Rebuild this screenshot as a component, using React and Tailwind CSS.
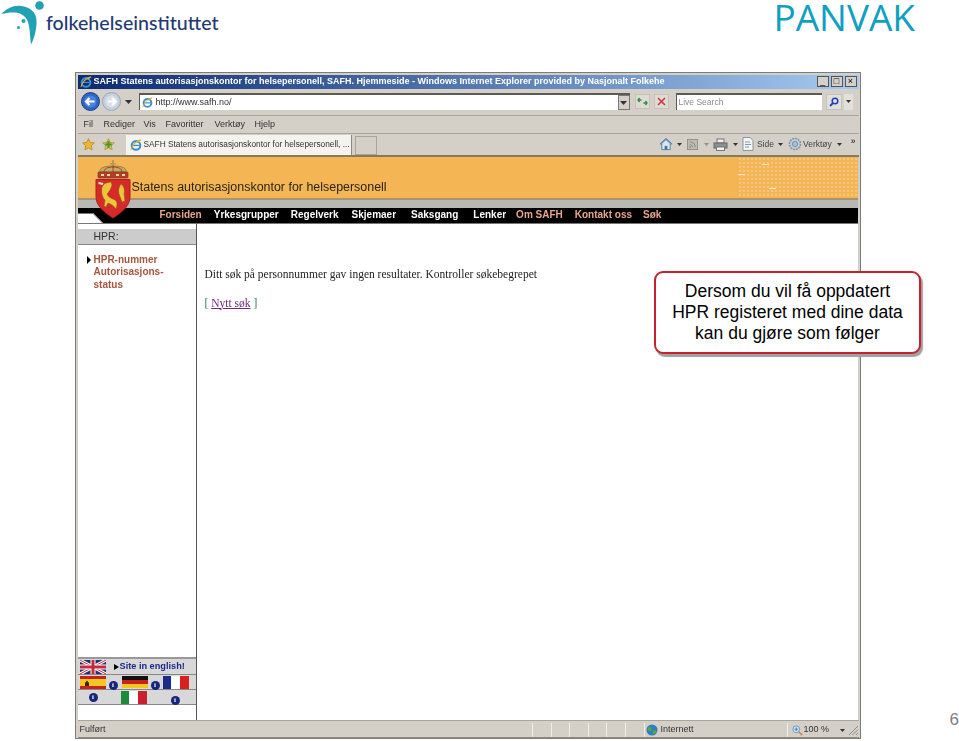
import React from 'react'

const Arrow = ({ className = '', small }) => (
  <svg width={small ? 5 : 7} height={small ? 3 : 4} viewBox="0 0 7 4" className={className}>
    <path d="M0 0h7L3.500 4z" fill="#333" />
  </svg>
)

const Logo = () => (
  <svg width="46" height="46" viewBox="0 0 46 46" className="shrink-0">
    <circle cx="39.500" cy="5.500" r="4.300" fill="#22a0b4" />
    <path d="M1.500 14C7 8 14 5 21 6c9 1 15 6 15.500 14 .3 9-2 18-5.500 24.500C30 37 30 28 28 22c-2-6-7-9-13-9.500-5-.3-9 .3-13.500 1.500z" fill="#22a0b4" />
    <circle cx="23.500" cy="21" r="2" fill="#22a0b4" />
    <circle cx="18.500" cy="27.500" r="1.500" fill="#22a0b4" />
  </svg>
)

const IeIcon = ({ size = 12 }) => (
  <svg width={size} height={size} viewBox="0 0 14 14" className="shrink-0">
    <circle cx="7" cy="7.500" r="5" fill="none" stroke="#3a8fd0" strokeWidth="2.400" />
    <path d="M3 7.500h8" stroke="#3a8fd0" strokeWidth="1.500" />
    <path d="M1 13C2 8 7 2 13 1c-2 1-3 2-4 3" fill="none" stroke="#e0b030" strokeWidth="1.200" />
  </svg>
)

const NavButton = ({ dim }) => (
  <svg width="19" height="19" viewBox="0 0 19 19" className="shrink-0">
    <circle cx="9.500" cy="9.500" r="9" fill={dim ? '#c5cfdc' : '#2f63c4'} stroke={dim ? '#9aa7b8' : '#1c3f8c'} />
    <circle cx="9.500" cy="9.500" r="6" fill={dim ? '#d8dfe8' : '#4b82dc'} />
    {dim
      ? <path d="M14 9.500H6M10 6l4 3.500-4 3.500" fill="none" stroke="#fff" strokeWidth="2" />
      : <path d="M5 9.500h8.500M8.500 6L5 9.500 8.500 13" fill="none" stroke="#fff" strokeWidth="2.200" />}
  </svg>
)

const Star = ({ fill, stroke }) => (
  <svg width="13" height="13" viewBox="0 0 14 14">
    <path d="M7 .8l1.900 4 4.400.5-3.200 3 .8 4.400L7 10.600l-3.900 2.100.8-4.400-3.200-3 4.400-.5z" fill={fill} stroke={stroke} strokeWidth=".7" />
  </svg>
)

const AddFav = () => (
  <svg width="13" height="13" viewBox="0 0 14 14">
    <path d="M7 .8l1.900 4 4.400.5-3.200 3 .8 4.400L7 10.600l-3.900 2.100.8-4.400-3.200-3 4.400-.5z" fill="#e4c040" stroke="#a08a20" strokeWidth=".7" />
    <path d="M7 3.500v7M3.500 7h7" stroke="#3f9a35" strokeWidth="2.400" />
  </svg>
)

const HomeIcon = () => (
  <svg width="14" height="14" viewBox="0 0 15 14">
    <path d="M7.500 1L1 7h2v6h9V7h2z" fill="#dfe4ea" stroke="#5a7a98" />
    <path d="M6 9h3v4H6z" fill="#3a78b8" />
    <path d="M7.500 1L1 7h2l4.500-4L12 7h2z" fill="#5f93c4" />
  </svg>
)

const RssIcon = () => (
  <svg width="11" height="11" viewBox="0 0 12 12">
    <rect x=".5" y=".5" width="11" height="11" fill="#bdbdb6" stroke="#8f8f8a" />
    <path d="M3 3c3.500 0 6 2.500 6 6M3 6c1.700 0 3 1.300 3 3" fill="none" stroke="#85857f" />
    <circle cx="3.500" cy="8.500" r="1" fill="#85857f" />
  </svg>
)

const PrintIcon = () => (
  <svg width="15" height="13" viewBox="0 0 15 13">
    <rect x="4" y="1" width="7" height="4" fill="#eee" stroke="#777" />
    <rect x="1" y="5" width="13" height="5" fill="#8a8f94" stroke="#666" />
    <rect x="3.500" y="9" width="8" height="3.500" fill="#f3f3f3" stroke="#777" />
  </svg>
)

const PageIcon = () => (
  <svg width="12" height="14" viewBox="0 0 12 14">
    <path d="M1 .5h7l3 3v10H1z" fill="#f2f4f6" stroke="#8a96a5" />
    <path d="M3 5h5M3 7.500h6M3 10h4" stroke="#7f9ab8" />
  </svg>
)

const GearIcon = () => (
  <svg width="14" height="14" viewBox="0 0 14 14">
    <circle cx="7" cy="7" r="5.500" fill="#c4ccd2" stroke="#7f98a8" strokeWidth="1.600" strokeDasharray="2 .8" />
    <circle cx="7" cy="7" r="2.500" fill="#a8c8e0" stroke="#6f8a9c" />
  </svg>
)

const GlobeIcon = () => (
  <svg width="12" height="12" viewBox="0 0 13 13" className="shrink-0">
    <circle cx="6.500" cy="6.500" r="6" fill="#2f7fc4" />
    <path d="M2 3c2-.5 3 .5 4 2S5 8 3.500 7.500 1.500 5 2 3zM8 7c1.500-.5 3 0 3.500 1-.5 2-2 3-3 3S7 8 8 7z" fill="#5aa83c" />
  </svg>
)

const ZoomIcon = () => (
  <svg width="11" height="11" viewBox="0 0 13 13" className="shrink-0">
    <circle cx="5" cy="5" r="4" fill="#cfe2f2" stroke="#5a8fc0" />
    <path d="M3 5h4M5 3v4" stroke="#2f6fb0" />
    <path d="M8 8l4 4" stroke="#c08a40" strokeWidth="1.800" />
  </svg>
)

const Grip = () => (
  <svg width="11" height="11" viewBox="0 0 11 11" className="shrink-0">
    <path d="M10 1L1 10M10 4.500L4.500 10M10 8l-2 2" stroke="#8f8c84" />
  </svg>
)

const Crest = () => (
  <svg width="36" height="60" viewBox="0 0 36 60" className="absolute left-[17px] top-[3px]">
    <path d="M17 0h2v3h2v1.500h-2V7h-2V4.500h-2V3h2z" fill="#b89a50" />
    <path d="M5 12C4 8 9 6 18 6s14 2 13 6z" fill="#c8a860" stroke="#7c5f2a" strokeWidth=".6" />
    <path d="M9 12c0-3 3-5 9-5s9 2 9 5M18 6v6" fill="none" stroke="#8a3028" strokeWidth=".8" />
    <rect x="3" y="12" width="30" height="6" rx="1" fill="#b8382c" stroke="#6a4a1a" strokeWidth=".7" />
    <path d="M6 15h3M12 15h3M21 15h3M27 15h3" stroke="#f0dc98" strokeWidth="2.200" />
    <path d="M1 19.500h34v17c0 9-7 15-17 21.500C8 51.500 1 45.500 1 36.500z" fill="#d62a2a" stroke="#b02020" />
    <path d="M3.500 22l5 1-1 2-4-1z" fill="#f2e8d8" />
    <path d="M9 24c2-1 5-2 7-2l1 3c-1 4-3 7-5 9 1 3 4 4 8 6 3 2 2 6 1 9-2-3-5-5-8-6l-2 4-2-1 1-6c-3-3-4-8-3-13 1-2 2-2 2-3z" fill="#eec53a" stroke="#7a5a14" strokeWidth=".5" />
    <path d="M26 24c3 2 4 6 3 10l1 7-3 1-3-8c-1-4 0-7 2-10z" fill="#eec53a" stroke="#7a5a14" strokeWidth=".5" />
  </svg>
)

const Notch = () => (
  <svg width="26" height="10" viewBox="0 0 26 10" className="absolute left-0 bottom-0">
    <path d="M0 0h15l10 10H0z" fill="#fff" />
    <path d="M0 .5h15l10 10" fill="none" stroke="#777" />
  </svg>
)

const UkFlag = () => (
  <svg width="26" height="14" viewBox="0 0 26 14" className="block shrink-0">
    <rect width="26" height="14" fill="#27306e" />
    <path d="M0 0l26 14M26 0L0 14" stroke="#fff" strokeWidth="3" />
    <path d="M0 0l26 14M26 0L0 14" stroke="#c8283c" strokeWidth="1" />
    <path d="M13 0v14M0 7h26" stroke="#fff" strokeWidth="5" />
    <path d="M13 0v14M0 7h26" stroke="#c8283c" strokeWidth="3" />
  </svg>
)

const Bands = ({ colors, vertical }) => (
  <div className={`flex shrink-0 w-[26px] h-[13px] ${vertical ? 'flex-row' : 'flex-col'}`}>
    {colors.map((c, i) => (
      <div key={i} className="flex-1" style={{ background: c }} />
    ))}
  </div>
)

const SpainFlag = () => (
  <svg width="26" height="13" viewBox="0 0 26 13" className="block shrink-0">
    <rect width="26" height="13" fill="#c8201c" />
    <rect y="3" width="26" height="7" fill="#f0c820" />
    <path d="M5 10V7l2-2.500L9 7v3z" fill="#402010" />
  </svg>
)

const Info = () => (
  <span className="inline-flex shrink-0 w-[9px] h-[9px] rounded-full bg-[#17257a] items-center justify-center text-white text-[7px] leading-none font-bold font-['Liberation_Serif',serif]">
    i
  </span>
)

const menuItems = [
  ['Fil', 'w-[20px]'],
  ['Rediger', 'w-[40px]'],
  ['Vis', 'w-[22px]'],
  ['Favoritter', 'w-[49px]'],
  ['Verktøy', 'w-[40px]'],
  ['Hjelp', 'w-[30px]'],
]

const navItems = [
  ['Forsiden', 'text-[#e9a58f]'],
  ['Yrkesgrupper', 'text-white ml-[12px]'],
  ['Regelverk', 'text-white ml-[12px]'],
  ['Skjemaer', 'text-white ml-[13px]'],
  ['Saksgang', 'text-white ml-[15px]'],
  ['Lenker', 'text-white ml-[15px]'],
  ['Om SAFH', 'text-[#e9a58f] ml-[10px]'],
  ['Kontakt oss', 'text-[#e9a58f] ml-[12px]'],
  ['Søk', 'text-[#e9a58f] ml-[11px]'],
]

export default function App() {
  return (
    <div className="relative w-[959px] h-[741px] overflow-hidden bg-white flex flex-col font-['Liberation_Sans',sans-serif]">
      {/* Slide header */}
      <header className="h-[72px] shrink-0 flex items-start justify-between pr-[44px]">
        <div className="flex items-start">
          <Logo />
          <span className="mt-[11px] text-[19.600px] leading-[24px] font-['Lato',sans-serif] font-medium text-[#233a72]">
            folkehelseinstituttet
          </span>
        </div>
        <span className="text-[37px] leading-[34px] font-['Open_Sans',sans-serif] text-[#10a0bf]">PANVAK</span>
      </header>

      <div className="flex flex-1 min-h-0 pl-[75px] pb-[2px]">
        {/* Browser window */}
        <div className="w-[786px] shrink-0 flex flex-col bg-[#d4d0c8] border border-[#7c7c78] pt-[1.500px] px-[1.500px] blur-[0.3px]">
          <div className="h-[14px] shrink-0 flex items-center justify-between bg-gradient-to-r from-[#0e2a70] to-[#a6caf0] px-[2px]">
            <div className="flex items-center gap-[2px]">
              <IeIcon />
              <span className="text-[9px] font-bold leading-none text-white whitespace-nowrap">
                SAFH Statens autorisasjonskontor for helsepersonell, SAFH. Hjemmeside - Windows Internet Explorer provided by Nasjonalt Folkehe
              </span>
            </div>
            <div className="flex gap-[2px]">
              {['_', '□', '×'].map((c) => (
                <span key={c} className="w-[12px] h-[11px] bg-[#d4d0c8] border border-[#555] flex items-center justify-center text-[9px] leading-none text-black">
                  {c}
                </span>
              ))}
            </div>
          </div>

          <div className="h-[27px] shrink-0 flex items-center pl-[3px] border-b border-[#a8a49c]">
            <NavButton />
            <span className="ml-[2px]"><NavButton dim /></span>
            <Arrow className="ml-[4px]" />
            <div className="ml-[7px] w-[491px] h-[17px] flex items-center bg-white border-t-2 border-l border-[#5c5a54] pl-[2px] text-[9px] text-[#333]">
              <IeIcon size={11} />
              <span className="ml-[3px]">http://www.safh.no/</span>
              <span className="ml-auto w-[12px] h-full bg-[#d4d0c8] border border-[#777] flex items-center justify-center">
                <Arrow />
              </span>
            </div>
            <span className="ml-[5px] w-[15px] h-[15px] bg-[#dedbd4] border border-[#c4c2bc] flex items-center justify-center">
              <svg width="11" height="9" viewBox="0 0 11 9">
                <path d="M1 3h3.500M2.500 1L1 3l1.500 2M10 6H6.500M8.500 4L10 6 8.500 8" fill="none" stroke="#2f8a3f" strokeWidth="1.300" />
              </svg>
            </span>
            <span className="ml-[4px] w-[15px] h-[15px] bg-[#dedbd4] border border-[#c4c2bc] flex items-center justify-center">
              <svg width="9" height="9" viewBox="0 0 9 9">
                <path d="M1 1l7 7M8 1L1 8" stroke="#d0303c" strokeWidth="1.500" />
              </svg>
            </span>
            <div className="ml-[7px] w-[146px] h-[17px] bg-white border-t-2 border-l border-[#5c5a54] pl-[2px] text-[8.500px] leading-[14px] text-[#8a8a8a]">
              Live Search
            </div>
            <span className="ml-[4px] w-[16px] h-[16px] bg-[#e2e0da] border border-[#c4c2bc] flex items-center justify-center">
              <svg width="10" height="10" viewBox="0 0 10 10">
                <circle cx="6" cy="4" r="2.800" fill="none" stroke="#2040b8" strokeWidth="1.500" />
                <path d="M4 6L1 9" stroke="#2040b8" strokeWidth="1.800" />
              </svg>
            </span>
            <span className="ml-[2px] w-[9px] h-[16px] bg-[#e2e0da] flex items-center justify-center">
              <Arrow small />
            </span>
          </div>

          <div className="h-[18px] shrink-0 flex items-center pl-[6px] border-b border-[#a8a49c] text-[9px] text-[#333]">
            {menuItems.map(([label, w]) => (
              <span key={label} className={`${w} leading-none`}>{label}</span>
            ))}
          </div>

          <div className="h-[23px] shrink-0 flex items-center pl-[4px] pr-[3px] border-b-2 border-[#8a7a5c]">
            <Star fill="#f0b828" stroke="#a87818" />
            <span className="ml-[7px]"><AddFav /></span>
            <div className="ml-[11px] w-[226px] h-[20px] self-end bg-[#f4f3ef] border-r border-[#888] flex items-center gap-[2px] pl-[4px] text-[8.300px] text-[#333] whitespace-nowrap">
              <IeIcon />
              SAFH Statens autorisasjonskontor for helsepersonell, ...
            </div>
            <div className="ml-[3px] w-[22px] h-[19px] self-end border border-[#a8a49c]" />
            <div className="ml-auto flex items-center text-[8.500px] text-[#444]">
              <HomeIcon />
              <Arrow small className="ml-[4px]" />
              <span className="ml-[5px]"><RssIcon /></span>
              <Arrow small className="ml-[6px] opacity-40" />
              <span className="ml-[4px]"><PrintIcon /></span>
              <Arrow small className="ml-[5px]" />
              <span className="ml-[4px]"><PageIcon /></span>
              <span className="ml-[3px]">Side</span>
              <Arrow small className="ml-[4px]" />
              <span className="ml-[5px]"><GearIcon /></span>
              <span className="ml-[1px]">Verktøy</span>
              <Arrow small className="ml-[5px]" />
              <span className="ml-[9px] mb-[6px] font-bold">»</span>
            </div>
          </div>

          {/* Page inside the browser */}
          <div className="flex-1 min-h-0 flex flex-col bg-white mr-[1px]">
            <div className="relative shrink-0">
              <div className="relative h-[43px] border-b-2 border-[#a8946c] bg-[#f4b555] flex items-center pl-[54px] pt-[20px]">
                <span className="text-[12.450px] font-medium text-[#2b2418]">
                  Statens autorisasjonskontor for helsepersonell
                </span>
                <div className="absolute right-0 top-0 bottom-0 w-[120px] bg-[radial-gradient(#f7c684_1px,transparent_1px)] bg-[length:4px_4px]" />
                <span className="absolute left-[684px] top-[7px] w-[7px] h-[1px] bg-[#fbe6c4]" />
                <span className="absolute left-[660px] top-[17px] w-[7px] h-[1px] bg-[#fbe6c4]" />
                <span className="absolute left-[691px] top-[31px] w-[7px] h-[1px] bg-[#fbe6c4]" />
              </div>
              <div className="h-[8px] bg-[#b8b8b4]" />
              <div className="relative h-[16px] bg-black border-b border-[#777] flex items-center pl-[82px] text-[10px] font-bold leading-none whitespace-nowrap">
                {navItems.map(([label, cls]) => (
                  <span key={label} className={cls}>{label}</span>
                ))}
                <Notch />
              </div>
              <Crest />
            </div>

            <div className="flex-1 min-h-0 flex">
              <aside className="w-[119px] shrink-0 flex flex-col border-r border-[#555]">
                <div className="mt-[5px] h-[16px] bg-[#cccccc] border-b border-[#888] pl-[16px] text-[10.500px] leading-[15px] text-[#333]">
                  HPR:
                </div>
                <div className="mt-[9px] pl-[9px] flex">
                  <span className="mt-[2px] w-0 h-0 border-y-[4px] border-y-transparent border-l-[4px] border-l-black" />
                  <div className="ml-[3px] text-[10px] leading-[12.500px] font-bold text-[#a5563e]">
                    <div>HPR-nummer</div>
                    <div>Autorisasjons-</div>
                    <div>status</div>
                  </div>
                </div>
                <div className="mt-auto mb-[15px] border-t-2 border-[#999] bg-[#d8d8d8]">
                  <div className="h-[16px] flex items-center pl-[2px] border-b border-[#888]">
                    <UkFlag />
                    <span className="ml-[8px] w-0 h-0 border-y-[3.500px] border-y-transparent border-l-[5px] border-l-black" />
                    <span className="ml-[1px] text-[9.200px] font-bold text-[#1c2a8c] whitespace-nowrap">Site in english!</span>
                  </div>
                  <div className="h-[15px] flex items-center pl-[2px] border-b border-[#888]">
                    <SpainFlag />
                    <span className="ml-[3px]"><Info /></span>
                    <span className="ml-[4px]"><Bands colors={['#111', '#c8201c', '#f0c820']} /></span>
                    <span className="ml-[3px]"><Info /></span>
                    <span className="ml-[3px]"><Bands colors={['#1c2a8c', '#fff', '#d8201c']} vertical /></span>
                  </div>
                  <div className="h-[15px] flex items-center pl-[11px] border-b border-[#888]">
                    <Info />
                    <span className="ml-[23px]"><Bands colors={['#1f8a3c', '#fff', '#c8202c']} vertical /></span>
                    <span className="ml-[24px]"><Info /></span>
                  </div>
                </div>
              </aside>
              <main className="flex-1 pl-[8px] pt-[43px] font-['Liberation_Serif',serif] text-[11.500px] leading-[14px] text-[#222]">
                <p>Ditt søk på personnummer gav ingen resultater. Kontroller søkebegrepet</p>
                <p className="mt-[15px] text-[#2f6f60]">
                  [ <span className="underline text-[#6b2a80]">Nytt søk</span> ]
                </p>
              </main>
            </div>
          </div>

          <div className="h-[18px] shrink-0 flex items-center pt-[2px] text-[9px] text-[#333] border-t border-[#a8a49c] border-b border-b-[#8f8c84]">
            <span className="flex-1 pl-[2px]">Fulført</span>
            <span className="w-[18.500px] h-full border-l border-[#eeeeea]" />
            <span className="w-[18.500px] h-full border-l border-[#eeeeea]" />
            <span className="w-[18.500px] h-full border-l border-[#eeeeea]" />
            <span className="w-[18.500px] h-full border-l border-[#eeeeea]" />
            <span className="w-[18.500px] h-full border-l border-[#eeeeea]" />
            <span className="w-[19px] h-full border-l border-[#eeeeea]" />
            <span className="w-[143px] h-full border-l border-[#eeeeea] flex items-center gap-[3px] pl-[1px]">
              <GlobeIcon />
              Internett
            </span>
            <span className="w-[72px] h-full border-l border-[#eeeeea] flex items-center pl-[4px]">
              <ZoomIcon />
              <span className="ml-[1px]">100 %</span>
              <Arrow small className="ml-[11px]" />
              <span className="ml-auto"><Grip /></span>
            </span>
          </div>
        </div>

        <div className="flex-1 flex items-end justify-end pb-[11px] text-[17px] leading-none text-[#808080]">6</div>
      </div>

      {/* Callout over the page */}
      <div className="absolute left-[654px] top-[271px] w-[267px] h-[83px] rounded-[9px] border-2 border-[#c8202f] bg-white shadow-[2px_3px_1px_#a0a0a0] flex items-center justify-center text-center text-[17.500px] leading-[21px] text-black whitespace-nowrap">
        <p>
          Dersom du vil få oppdatert
          <br />
          HPR registeret med dine data
          <br />
          kan du gjøre som følger
        </p>
      </div>
    </div>
  )
}
